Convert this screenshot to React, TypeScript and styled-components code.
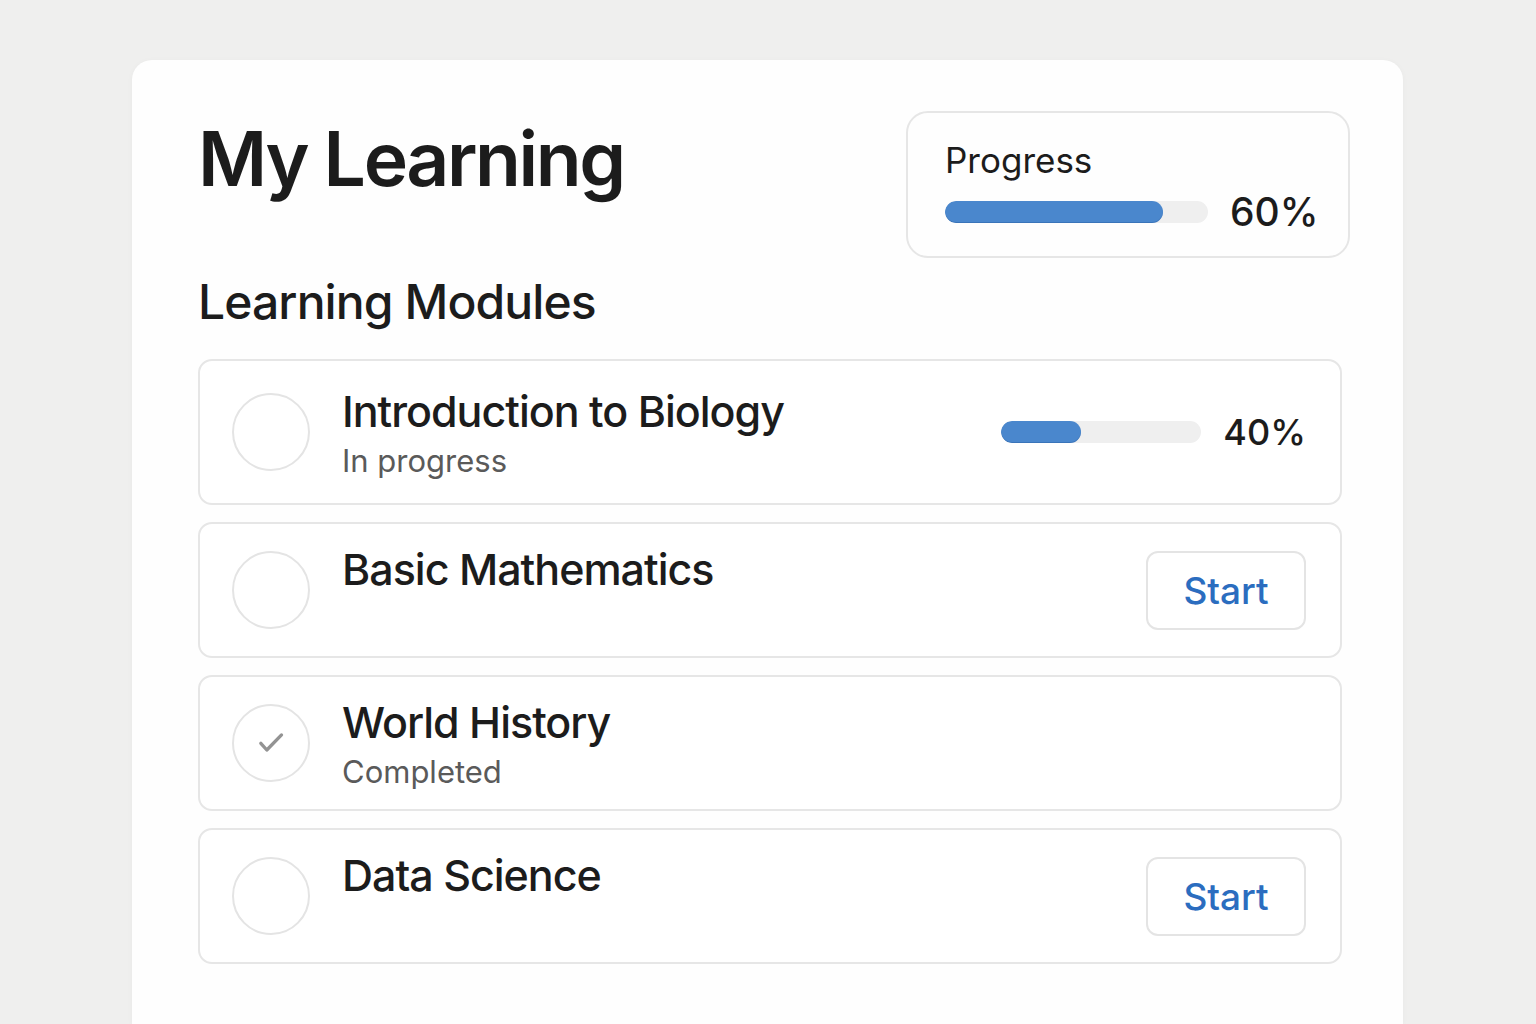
import styled, { createGlobalStyle } from "styled-components";

const GlobalStyle = createGlobalStyle`
  html, body {
    margin: 0;
    padding: 0;
    background: #efefee;
    font-family: Inter, "Noto Sans", "Liberation Sans", sans-serif;
    color: #1c1c1c;
  }
`;

type Module = {
  title: string;
  status?: string;
  progress?: number;
  done?: boolean;
};

const modules: Module[] = [
  { title: "Introduction to Biology", status: "In progress", progress: 40 },
  { title: "Basic Mathematics" },
  { title: "World History", status: "Completed", done: true },
  { title: "Data Science" },
];

const App = () => {
  return (
    <>
      <GlobalStyle />
      <Page>
        <Card>
          <Header>
            <Title>My Learning</Title>
            <ProgressCard>
              <ProgressLabel>Progress</ProgressLabel>
              <ProgressRow>
                <Track $width={263}>
                  <Fill style={{ width: "83%" }} />
                </Track>
                <Percent $size={39}>60%</Percent>
              </ProgressRow>
            </ProgressCard>
          </Header>

          <SectionTitle>Learning Modules</SectionTitle>

          <List>
            {modules.map((m) => (
              <Row key={m.title} $tall={m.progress !== undefined}>
                <Circle>
                  {m.done && (
                    <svg width="42" height="42" viewBox="0 0 24 24" fill="none">
                      <path
                        d="M6.2 12.2l3.4 3.8 8.4-8.6"
                        stroke="#939393"
                        strokeWidth="1.9"
                        strokeLinecap="round"
                        strokeLinejoin="round"
                      />
                    </svg>
                  )}
                </Circle>
                <Info>
                  <ModuleTitle>{m.title}</ModuleTitle>
                  <Status>{m.status ?? "\u00a0"}</Status>
                </Info>
                {m.progress !== undefined && (
                  <ProgressRow>
                    <Track $width={200}>
                      <Fill style={{ width: `${m.progress}%` }} />
                    </Track>
                    <Percent $size={36}>{m.progress}%</Percent>
                  </ProgressRow>
                )}
                {!m.status && <StartButton>Start</StartButton>}
              </Row>
            ))}
          </List>
        </Card>
      </Page>
    </>
  );
};

const Page = styled.div`
  min-height: 1024px;
  box-sizing: border-box;
  padding: 60px 133px 0 132px;
`;

const Card = styled.div`
  background: #fefefe;
  border-radius: 20px 20px 0 0;
  box-shadow: 0 1px 6px rgba(0, 0, 0, 0.03);
  min-height: 964px;
  box-sizing: border-box;
  padding: 51px 61px 40px 66px;
`;

const Header = styled.div`
  display: flex;
  justify-content: space-between;
  align-items: flex-start;
  margin-right: -8px;
`;

const Title = styled.h1`
  margin: 10px 0 0;
  font-size: 75px;
  font-weight: 600;
  line-height: 1;
  letter-spacing: -2.4px;
`;

const ProgressCard = styled.div`
  width: 444px;
  height: 147px;
  box-sizing: border-box;
  border: 2px solid #e6e6e6;
  border-radius: 22px;
  padding: 26px 34px 0 37px;
  display: flex;
  flex-direction: column;
  gap: 11px;
`;

const ProgressLabel = styled.div`
  font-size: 35px;
  font-weight: 400;
  line-height: 1.2;
`;

const ProgressRow = styled.div`
  display: flex;
  align-items: center;
  gap: 22px;
`;

const Track = styled.div<{ $width: number }>`
  flex: none;
  width: ${(p) => p.$width}px;
  height: 22px;
  border-radius: 11px;
  background: #efefef;
  overflow: hidden;
`;

const Fill = styled.div`
  height: 100%;
  border-radius: 11px;
  background: #4a87cd;
  box-shadow: inset 0 -1px 0 rgba(30, 80, 150, 0.35);
`;

const Percent = styled.span<{ $size: number }>`
  font-size: ${(p) => p.$size}px;
  font-weight: 500;
  letter-spacing: 0;
  line-height: 1;
`;

const SectionTitle = styled.h2`
  margin: 19px 0 32px;
  font-size: 48px;
  font-weight: 500;
  line-height: 1.05;
  letter-spacing: -0.9px;
`;

const List = styled.div`
  display: flex;
  flex-direction: column;
  gap: 17px;
`;

const Row = styled.div<{ $tall?: boolean }>`
  display: flex;
  align-items: center;
  min-height: ${(p) => (p.$tall ? 146 : 136)}px;
  box-sizing: border-box;
  border: 2px solid #e6e6e6;
  border-radius: 14px;
  padding: 18px 34px 18px 32px;
  background: #fff;
`;

const Circle = styled.div`
  width: 78px;
  height: 78px;
  box-sizing: border-box;
  border: 2px solid #e4e4e4;
  border-radius: 50%;
  flex: none;
  display: flex;
  align-items: center;
  justify-content: center;
`;

const Info = styled.div`
  flex: 1;
  margin-left: 32px;
  display: flex;
  flex-direction: column;
  gap: 5px;
`;

const ModuleTitle = styled.div`
  font-size: 43px;
  font-weight: 500;
  line-height: 1.2;
  letter-spacing: -1px;
`;

const Status = styled.div`
  font-size: 31px;
  color: #5a5a5a;
  line-height: 1.2;
`;

const StartButton = styled.button`
  width: 160px;
  height: 79px;
  border: 2px solid #e4e4e4;
  border-radius: 12px;
  background: #fff;
  color: #2b6dbf;
  font-family: Inter, "Noto Sans", sans-serif;
  font-size: 37px;
  font-weight: 500;
  cursor: pointer;
`;

export default App;
